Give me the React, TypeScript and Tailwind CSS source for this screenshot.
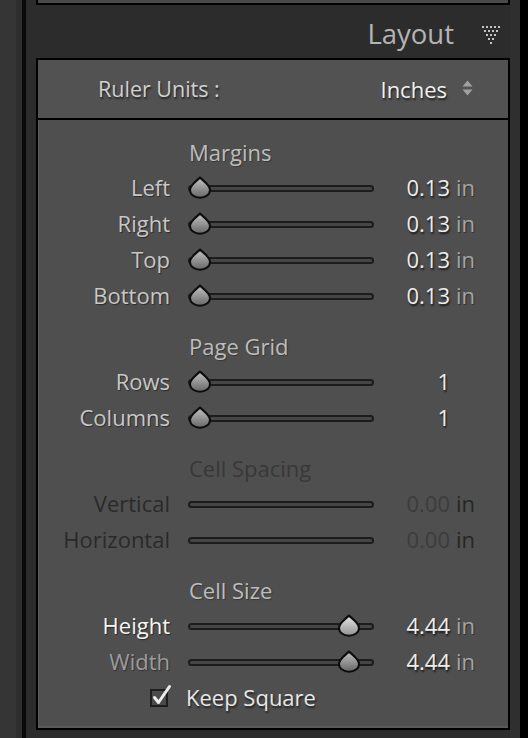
import React from "react";

const FONT = { fontFamily: "'Open Sans', Lato, sans-serif" };

function Thumb({ light }: { light?: boolean }) {
  const id = light ? "tg-light" : "tg-dark";
  return (
    <svg width="24" height="23" viewBox="0 0 24 23">
      <defs>
        <linearGradient id={id} x1="0" y1="0" x2="0" y2="1">
          <stop offset="0" stopColor={light ? "#e6e6e6" : "#c4c4c4"} />
          <stop offset="1" stopColor={light ? "#929292" : "#666666"} />
        </linearGradient>
      </defs>
      <path
        d="M12 1.5 C14.5 4.5 22 8.5 22 14 A10 7.8 0 0 1 2 14 C2 8.5 9.5 4.5 12 1.5 Z"
        fill={`url(#${id})`}
        stroke="#0d0d0d"
        strokeWidth="2"
        strokeLinejoin="round"
      />
    </svg>
  );
}

function Slider({ pos, light, disabled }: { pos?: number; light?: boolean; disabled?: boolean }) {
  return (
    <div className="relative mt-[4px] flex h-[23px] w-[186px] items-center">
      <div className="h-[7px] w-full rounded-full border-2 border-[#1c1c1c] bg-[#464646]" />
      {!disabled && pos !== undefined && (
        <div className="absolute top-[-1px]" style={{ left: pos }}>
          <Thumb light={light} />
        </div>
      )}
    </div>
  );
}

type RowProps = {
  label: string;
  value: string;
  unit?: boolean;
  pos?: number;
  disabled?: boolean;
  labelClass?: string;
  light?: boolean;
};

function Row({ label, value, unit = true, pos = 0, disabled, labelClass, light }: RowProps) {
  const lc = disabled
    ? "text-[#2a2a2a]"
    : labelClass ?? "text-[#c8c8c8] [text-shadow:1px_1px_1px_rgba(0,0,0,0.45)]";
  return (
    <div className="flex h-[36px] items-center">
      <div className={`mt-[2px] w-[132px] text-right text-[22px] leading-none ${lc}`}>{label}</div>
      <div className="ml-[18px]">
        <Slider pos={pos} disabled={disabled} light={light} />
      </div>
      <div
        className={`mt-[2px] w-[76px] text-right text-[22px] leading-none ${
          disabled
            ? "text-[#3c3c3c]"
            : "text-[#ededed] [text-shadow:1px_2px_2px_rgba(0,0,0,0.7)]"
        }`}
      >
        {value}
      </div>
      {unit && (
        <div
          className={`ml-[6px] mt-[2px] text-[22px] leading-none ${
            disabled ? "text-[#262626]" : "text-[#a4a4a4] [text-shadow:1px_1px_1px_rgba(0,0,0,0.4)]"
          }`}
        >
          in
        </div>
      )}
    </div>
  );
}

function Heading({ children, dim }: { children: React.ReactNode; dim?: boolean }) {
  return (
    <div
      className={`flex h-[35px] items-center pl-[151px] pt-[2px] text-[22px] leading-none ${
        dim ? "text-[#383838]" : "text-[#bdbdbd] [text-shadow:1px_1px_1px_rgba(0,0,0,0.3)]"
      }`}
    >
      {children}
    </div>
  );
}

function DotTriangle() {
  const dots: [number, number][] = [];
  const rows = [5, 4, 3, 2, 1];
  rows.forEach((n, r) => {
    for (let i = 0; i < n; i++) dots.push([r * 2 + i * 4, r * 4]);
  });
  return (
    <svg width="18" height="18" viewBox="0 0 18 18">
      {dots.map(([x, y], i) => (
        <rect key={i} x={x} y={y} width="2" height="2" fill="#c4c4c4" />
      ))}
    </svg>
  );
}

export default function App() {
  return (
    <div className="flex h-[738px] w-[528px] overflow-hidden bg-[#2c2c2c]" style={FONT}>
      <div className="w-[16px] bg-[#353535]" />
      <div className="w-[6px] bg-[#2e2e2e]" />
      <div className="w-[4px] bg-[#0a0a0a]" />
      <div className="w-[10px] bg-[#2c2c2c]" />
      <div className="flex w-[474px] flex-col">
        <div className="h-[5px] border-x-2 border-b-2 border-black bg-[#4a4a4a]" />
        <div className="flex h-[53px] items-center justify-end pt-[4px]">
          <span className="text-[27.5px] leading-none text-[#b4b4b4]">Layout</span>
          <span className="ml-[28px] mr-[10px] mt-[2px] flex">
            <DotTriangle />
          </span>
        </div>
        <div className="mb-[8px] flex flex-1 flex-col border-2 border-black">
          <div className="flex h-[60px] items-center border-b-2 border-black bg-[#525252] pl-[60px] pr-[35px]">
            <span className="text-[21.5px] leading-none text-[#d0d0d0] [text-shadow:1px_2px_2px_rgba(0,0,0,0.6)]">
              Ruler Units :
            </span>
            <span className="ml-auto text-[22px] leading-none text-[#f0f0f0] [text-shadow:1px_2px_2px_rgba(0,0,0,0.6)]">
              Inches
            </span>
            <svg className="ml-[15px] mb-[2px]" width="11" height="16" viewBox="0 0 11 16">
              <path d="M0.5 6.5 L5.5 0.5 L10.5 6.5 Z" fill="#a0a0a0" />
              <path d="M0.5 9.5 L5.5 15.5 L10.5 9.5 Z" fill="#a0a0a0" />
            </svg>
          </div>
          <div className="flex-1 bg-[#4f4f4f] pt-[13px] shadow-[inset_1px_0_0_#5c5c5c,inset_0_-2px_0_#5a5a5a]">
            <Heading>Margins</Heading>
            <Row label="Left" value="0.13" />
            <Row label="Right" value="0.13" />
            <Row label="Top" value="0.13" />
            <Row label="Bottom" value="0.13" />
            <div className="h-[15px]" />
            <Heading>Page Grid</Heading>
            <Row label="Rows" value="1" unit={false} />
            <Row label="Columns" value="1" unit={false} />
            <div className="h-[15px]" />
            <Heading dim>Cell Spacing</Heading>
            <Row label="Vertical" value="0.00" disabled />
            <Row label="Horizontal" value="0.00" disabled />
            <div className="h-[15px]" />
            <Heading>Cell Size</Heading>
            <Row
              label="Height"
              value="4.44"
              pos={149}
              light
              labelClass="text-[#f6f6f6] [text-shadow:1px_1px_1px_rgba(0,0,0,0.5)]"
            />
            <Row
              label="Width"
              value="4.44"
              pos={149}
              labelClass="text-[#9c9c9c] [text-shadow:1px_1px_1px_rgba(0,0,0,0.4)]"
            />
            <div className="flex h-[36px] items-center pl-[111px]">
              <svg width="24" height="24" viewBox="0 0 24 24">
                <rect x="2" y="6" width="16" height="16" fill="#4a4a4a" stroke="#1e1e1e" strokeWidth="2" />
                <path
                  d="M5.5 13.5 L9.5 18.5 L20.5 2.5"
                  fill="none"
                  stroke="#ececec"
                  strokeWidth="3"
                  strokeLinecap="round"
                  strokeLinejoin="round"
                />
              </svg>
              <span className="ml-[13px] mt-[2px] text-[22px] leading-none text-[#e8e8e8] [text-shadow:1px_2px_2px_rgba(0,0,0,0.6)]">
                Keep Square
              </span>
            </div>
          </div>
        </div>
      </div>
      <div className="w-[10px] bg-[#2f2f2f]" />
      <div className="w-[8px] bg-black" />
    </div>
  );
}
